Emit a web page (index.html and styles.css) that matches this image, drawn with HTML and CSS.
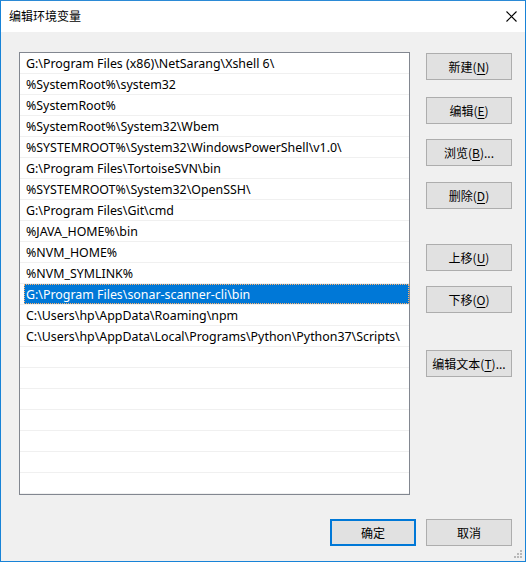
FILE: index.html
```html
<!DOCTYPE html>
<html lang="zh-CN">
<head>
<meta charset="utf-8">
<title>编辑环境变量</title>
<link rel="stylesheet" href="styles.css">
</head>
<body>
<div class="window">
  <div class="titlebar">
    <span class="title">编辑环境变量</span>
    <span class="close">
      <svg width="11" height="11" viewBox="0 0 11 11"><path d="M0.5 0.5 L10.5 10.5 M10.5 0.5 L0.5 10.5" stroke="#000" stroke-width="1.1" fill="none"/></svg>
    </span>
  </div>
  <div class="client">
    <div class="main">
      <div class="list">
        <div class="row">G:\Program Files (x86)\NetSarang\Xshell 6\</div>
        <div class="row">%SystemRoot%\system32</div>
        <div class="row">%SystemRoot%</div>
        <div class="row">%SystemRoot%\System32\Wbem</div>
        <div class="row">%SYSTEMROOT%\System32\WindowsPowerShell\v1.0\</div>
        <div class="row">G:\Program Files\TortoiseSVN\bin</div>
        <div class="row">%SYSTEMROOT%\System32\OpenSSH\</div>
        <div class="row">G:\Program Files\Git\cmd</div>
        <div class="row">%JAVA_HOME%\bin</div>
        <div class="row">%NVM_HOME%</div>
        <div class="row">%NVM_SYMLINK%</div>
        <div class="row selected"><span class="sel">G:\Program Files\sonar-scanner-cli\bin</span></div>
        <div class="row">C:\Users\hp\AppData\Roaming\npm</div>
        <div class="row">C:\Users\hp\AppData\Local\Programs\Python\Python37\Scripts\</div>
        <div class="row"></div>
        <div class="row"></div>
        <div class="row"></div>
        <div class="row"></div>
        <div class="row"></div>
        <div class="row"></div>
        <div class="row last"></div>
      </div>
      <div class="side">
        <button class="btn b-new">新建(<u>N</u>)</button>
        <button class="btn b-edit">编辑(<u>E</u>)</button>
        <button class="btn b-browse">浏览(<u>B</u>)...</button>
        <button class="btn b-del">删除(<u>D</u>)</button>
        <button class="btn b-up">上移(<u>U</u>)</button>
        <button class="btn b-down">下移(<u>O</u>)</button>
        <button class="btn b-text">编辑文本(<u>T</u>)...</button>
      </div>
    </div>
    <div class="footer">
      <button class="btn default">确定</button>
      <button class="btn">取消</button>
    </div>
    <div class="grip">
      <svg width="8" height="8" viewBox="0 0 8 8" fill="#b8b8b8"><rect x="6" y="0" width="2" height="2"/><rect x="3" y="3" width="2" height="2"/><rect x="6" y="3" width="2" height="2"/><rect x="0" y="6" width="2" height="2"/><rect x="3" y="6" width="2" height="2"/><rect x="6" y="6" width="2" height="2"/></svg>
    </div>
  </div>
</div>
</body>
</html>
```
FILE: styles.css
```css
html, body {
  margin: 0;
  padding: 0;
}
body {
  width: 528px;
  height: 564px;
  background: #ffffff;
  overflow: hidden;
  font-family: "Noto Sans", "Noto Sans CJK SC", sans-serif;
  font-size: 12px;
  color: #000;
}
.window {
  width: 524px;
  height: 560px;
  border: 1px solid #1883d7;
  border-top-color: #2b8ad6;
  background: #f0f0f0;
  display: flex;
  flex-direction: column;
}
.titlebar {
  height: 31px;
  background: #fff;
  display: flex;
  align-items: center;
  justify-content: space-between;
  flex: none;
}
.title {
  padding-left: 8px;
  font-family: "Noto Sans CJK SC", sans-serif;
  font-size: 12px;
  line-height: 16px;
  margin-top: -1px;
}
.close {
  width: 28px;
  height: 31px;
  display: flex;
  align-items: center;
  justify-content: center;
}
.close svg { display: block; }
.client {
  flex: 1;
  position: relative;
  padding: 20px 13px 0 18px;
  display: flex;
  flex-direction: column;
}
.main {
  display: flex;
  gap: 16px;
}
.list {
  width: 389px;
  height: 441px;
  border: 1px solid #828790;
  background: #fff;
  overflow: hidden;
  display: flex;
  flex-direction: column;
}
.row {
  border-bottom: 1px solid #f0f0f0;
  line-height: 18px;
  padding-top: 2px;
  box-sizing: border-box;
  height: 21px;
  padding-left: 6px;
  white-space: nowrap;
  flex: none;
  font-size: 12.4px;
}
.row.selected {
  padding: 0 0 0 4px;
  display: flex;
}
.sel {
  flex: 1;
  background: #0078d7;
  color: #fff;
  padding: 2px 0 0 2px;
  line-height: 18px;
  outline: 1px dotted #ffb26b;
  outline-offset: -1px;
}
.side {
  display: flex;
  flex-direction: column;
  width: 86px;
}
.btn {
  width: 86px;
  height: 27px;
  background: #e1e1e1;
  border: 1px solid #adadad;
  font-family: "Noto Sans CJK SC", sans-serif;
  font-size: 12px;
  color: #000;
  padding: 0;
  margin: 0;
  line-height: 16px;
}
.btn u { text-underline-offset: 2px; }
.b-new { margin-top: 1px; }
.b-edit { margin-top: 17px; }
.b-browse { margin-top: 15px; }
.b-del { margin-top: 16px; }
.b-up { margin-top: 35px; }
.b-down { margin-top: 15px; }
.b-text { margin-top: 37px; }
.footer {
  display: flex;
  justify-content: flex-end;
  gap: 10px;
  margin-top: 24px;
}
.btn.default {
  border: 2px solid #0078d7;
}
.grip {
  position: absolute;
  right: 3px;
  bottom: 3px;
  line-height: 0;
}
```
